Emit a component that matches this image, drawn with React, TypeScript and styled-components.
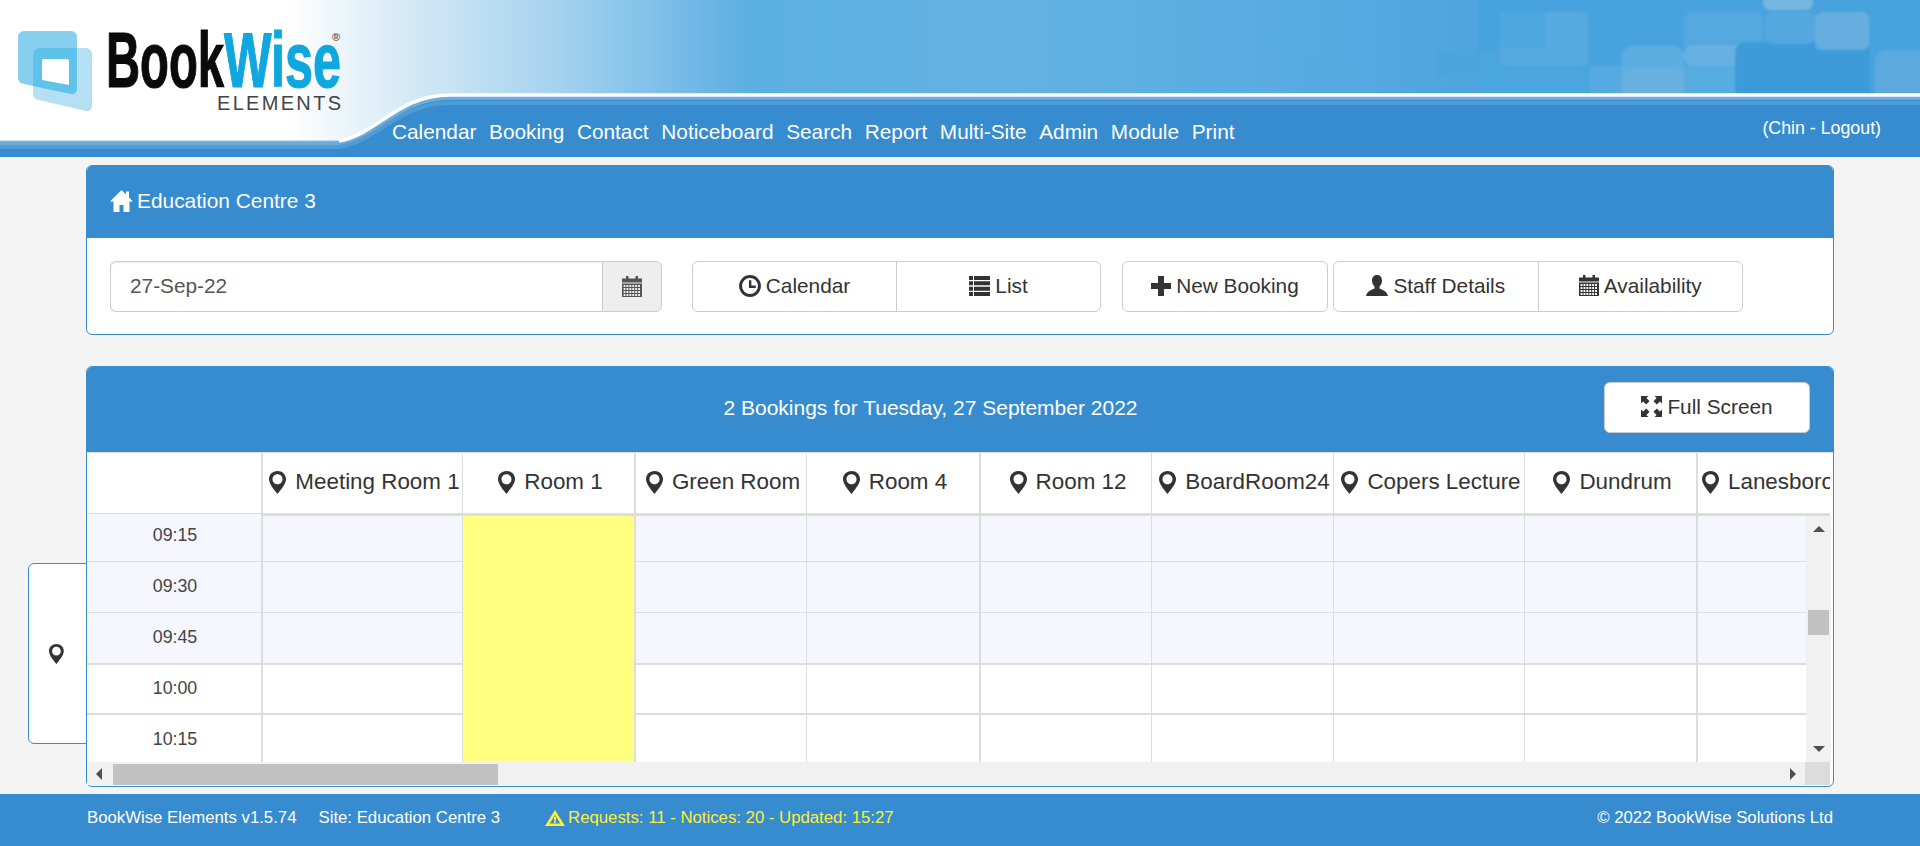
import React from "react";
import styled, { createGlobalStyle } from "styled-components";

const BLUE = "#378cd0";

const Global = createGlobalStyle`
  html, body { margin: 0; padding: 0; background: #f4f4f4; overflow: hidden; }
  body { font-family: "Liberation Sans", Arial, sans-serif; color: #333; }
  * { box-sizing: border-box; }
`;

const Page = styled.div`
  display: flex;
  flex-direction: column;
  height: 846px;
`;

/* ---------- top banner ---------- */
const Banner = styled.header`
  position: relative;
  height: 157px;
  flex: none;
  display: flex;
  align-items: flex-start;
  overflow: hidden;
  background: #fff;
`;
const BannerArt = styled.svg`
  position: absolute;
  inset: 0;
  width: 1920px;
  height: 157px;
`;
const Logo = styled.svg`
  position: relative;
  flex: none;
  width: 392px;
  height: 130px;
`;
const Nav = styled.nav`
  position: relative;
  display: flex;
  gap: 12.7px;
  margin-top: 120px;
  font-size: 20.8px;
  line-height: 24px;
  color: #fff;
  flex: 1;
`;
const UserLink = styled.div`
  position: relative;
  margin: 117px 39px 0 0;
  font-size: 17.8px;
  line-height: 22px;
  color: #fff;
`;

/* ---------- panels ---------- */
const Main = styled.main`
  flex: 1;
  padding: 8px 86px 0 86px;
  display: flex;
  flex-direction: column;
  gap: 31px;
`;
const Panel = styled.section<{ $h: number }>`
  position: relative;
  height: ${(p) => p.$h}px;
  flex: none;
  border: 1px solid ${BLUE};
  border-radius: 6px;
  background: #fff;
`;
const PlaceHead = styled.div`
  height: 72px;
  background: ${BLUE};
  border-radius: 5px 5px 0 0;
  display: flex;
  align-items: center;
  gap: 4px;
  padding: 0 0 3px 23px;
  font-size: 20.9px;
  color: #fff;
`;
const Toolbar = styled.div`
  display: flex;
  padding: 23px 0 0 23px;
`;
const DateGroup = styled.div`
  display: flex;
  width: 552px;
  height: 51px;
  margin-right: 30px;
`;
const DateInput = styled.input`
  flex: 1;
  min-width: 0;
  border: 1px solid #ccc;
  border-right: 0;
  border-radius: 6px 0 0 6px;
  padding: 0 19px 2px;
  font: 20.8px "Liberation Sans", Arial, sans-serif;
  color: #555;
  box-shadow: inset 0 1px 1px rgba(0, 0, 0, 0.075);
  outline: none;
`;
const DateAddon = styled.div`
  width: 60px;
  display: flex;
  align-items: center;
  justify-content: center;
  background: #eee;
  border: 1px solid #ccc;
  border-radius: 0 6px 6px 0;
  color: #555;
`;
const BtnGroup = styled.div<{ $w: number; $mr: number }>`
  display: flex;
  width: ${(p) => p.$w}px;
  height: 51px;
  margin-right: ${(p) => p.$mr}px;
  border: 1px solid #ccc;
  border-radius: 6px;
  background: #fff;
`;
const Btn = styled.button`
  flex: 1;
  display: flex;
  align-items: center;
  justify-content: center;
  gap: 5px;
  padding: 0 0 2px;
  border: 0;
  background: none;
  font: 20.8px "Liberation Sans", Arial, sans-serif;
  color: #333;
  & + & { border-left: 1px solid #ccc; }
`;
const BoardHead = styled.div`
  height: 85px;
  background: ${BLUE};
  border-radius: 5px 5px 0 0;
  display: flex;
  align-items: flex-start;
  padding: 15px 23px 0 170px;
`;
const BoardTitle = styled.h2`
  flex: 1;
  margin: 0;
  font-weight: 400;
  font-size: 21px;
  line-height: 52px;
  text-align: center;
  color: #fff;
`;
const FullBtn = styled.button`
  width: 206px;
  height: 51px;
  display: flex;
  align-items: center;
  justify-content: center;
  gap: 5px;
  padding: 0 0 2px;
  background: #fff;
  border: 1px solid #ccc;
  border-radius: 6px;
  font: 20.8px "Liberation Sans", Arial, sans-serif;
  color: #333;
`;
const SideTab = styled.div`
  position: absolute;
  left: -59px;
  top: 196px;
  width: 59px;
  height: 181px;
  background: #fff;
  border: 1px solid ${BLUE};
  border-radius: 6px 0 0 6px;
  display: flex;
  align-items: center;
  justify-content: center;
  padding-right: 2px;
`;

/* ---------- schedule ---------- */
const HeadRow = styled.div`
  display: flex;
  height: 64px;
  border-top: 1px solid #ddd;
  background: #fff;
`;
const TimeHead = styled.div`
  width: 174px;
  flex: none;
  border-bottom: 2px solid #f6f7fe;
  box-shadow: inset 0 -1px 0 #ddd;
`;
const RoomHead = styled.div<{ $w: number; $b: number }>`
  width: ${(p) => p.$w}px;
  flex: none;
  border-left: ${(p) => p.$b}px solid #ddd;
  border-bottom: 3px solid #ddd;
  display: flex;
  align-items: center;
  justify-content: safe center;
  gap: 9px;
  padding: 0 0 2px 4px;
  font-size: 22.4px;
  color: #333;
  white-space: nowrap;
  overflow: hidden;
`;
const BodyArea = styled.div`
  display: flex;
  height: 246px;
`;
const Clip = styled.div`
  flex: none;
  width: 1719px;
  height: 246px;
  overflow: hidden;
  display: flex;
`;
const Column = styled.div<{ $w: number; $b: number }>`
  width: ${(p) => p.$w}px;
  flex: none;
  border-left: ${(p) => p.$b}px solid #ddd;
  margin-top: -5px;
`;
const Slot = styled.div<{ $h: number; $line: number; $tint: boolean }>`
  height: ${(p) => p.$h}px;
  background: ${(p) => (p.$tint ? "#f6f7fe" : "#fff")};
  border-bottom: ${(p) => p.$line}px solid #ddd;
`;
const TimeSlot = styled(Slot)`
  display: flex;
  align-items: center;
  justify-content: center;
  padding: 0 0 2px 2px;
  font-size: 17.8px;
  color: #444;
`;
const TimeColumn = styled.div`
  width: 174px;
  flex: none;
  margin-top: -5px;
`;
const BookingBlock = styled.div`
  height: 270px;
  background: #ffff80;
`;
const VBar = styled.div`
  width: 25px;
  flex: none;
  height: 246px;
  background: #f1f1f1;
  display: flex;
  flex-direction: column;
  align-items: center;
  padding-top: 94px;
  position: relative;
`;
const Thumb = styled.div`
  width: 21px;
  height: 25px;
  background: #c1c1c1;
`;
const ArrowBtn = styled.svg<{ $pos: string }>`
  position: absolute;
  ${(p) => p.$pos}
  fill: #505050;
`;
const HBar = styled.div`
  position: relative;
  display: flex;
  width: 1743px;
  height: 23px;
  background: #f1f1f1;
`;
const HThumb = styled.div`
  margin: 2px 0 0 26px;
  width: 385px;
  height: 21px;
  background: #c1c1c1;
`;
const Corner = styled.div`
  margin-left: auto;
  width: 25px;
  background: #dcdcdc;
`;

/* ---------- footer ---------- */
const Footer = styled.footer`
  height: 52px;
  flex: none;
  background: ${BLUE};
  color: #fff;
  display: flex;
  align-items: center;
  padding: 0 87px 5px;
  font-size: 16.75px;
`;
const FootItem = styled.span<{ $mr: number }>`
  margin-right: ${(p) => p.$mr}px;
`;
const FootAlert = styled.span`
  display: flex;
  align-items: center;
  gap: 3px;
  color: #ffee33;
`;
const FootRight = styled.span`
  margin-left: auto;
`;

/* ---------- icons ---------- */
const IconSvg = styled.svg`
  flex: none;
  fill: currentColor;
`;
const MarkerSvg = styled(IconSvg)`
  color: #333;
`;
const Marker = ({ s = 23 }: { s?: number }) => (
  <MarkerSvg width={s * 0.74} height={s} viewBox="0 0 17 23">
    <path
      fillRule="evenodd"
      d="M8.5 0C3.6 0 0 3.6 0 8.2 0 13 5.5 19 8.5 23c3-4 8.5-10 8.5-14.800C17 3.600 13.400 0 8.500 0zm0 3.300c3 0 5 2.200 5 5s-2 5-5 5-5-2.200-5-5 2-5 5-5z"
    />
  </MarkerSvg>
);
const HomeIcon = () => (
  <IconSvg width="23" height="22" viewBox="0 0 23 22">
    <path d="M11.500 0 0 11.500h3.500V22h6v-7h4v7h6V11.500H23l-4-4V1.500h-3v3z" />
  </IconSvg>
);
const calendarDots = (() => {
  let d = "M0 7.500h20V21H0z";
  for (let r = 0; r < 4; r++) {
    for (let c = 0; c < 6; c++) {
      d += `M${1.6 + c * 2.9} ${9 + r * 3}h1.900v1.900h-1.900z`;
    }
  }
  return d;
})();
const CalIcon = () => (
  <IconSvg width="20" height="21" viewBox="0 0 20 21">
    <path d="M4 0h2.500v2.500h7V0H16v2.500h4v4H0v-4h4z" />
    <path fillRule="evenodd" d={calendarDots} />
  </IconSvg>
);
const ClockIcon = () => (
  <IconSvg width="22" height="22" viewBox="0 0 21 21">
    <circle cx="10.500" cy="10.500" r="9" fill="none" stroke="currentColor" strokeWidth="2.800" />
    <path d="M9.500 5h2.300v5h4.200v2.300H9.500z" />
  </IconSvg>
);
const ListIcon = () => (
  <IconSvg width="21" height="20" viewBox="0 0 21 20">
    <path d="M0 0h4v4H0zM5 0h16v4H5zM0 5.300h4v4H0zM5 5.300h16v4H5zM0 10.700h4v4H0zM5 10.700h16v4H5zM0 16h4v4H0zM5 16h16v4H5z" />
  </IconSvg>
);
const PlusIcon = () => (
  <IconSvg width="20" height="20" viewBox="0 0 20 20">
    <path d="M7 0h6v7h7v6h-7v7H7v-7H0V7h7z" />
  </IconSvg>
);
const UserIcon = () => (
  <IconSvg width="22" height="21" viewBox="0 0 22 21">
    <path d="M11 0C7.500 0 6 2.500 6 5.500c0 2.500 1 4.500 2.500 6v2C5.500 15 1 16 0 21h22c-1-5-5.500-6-8.500-7.500v-2c1.500-1.500 2.500-3.500 2.500-6C16 2.500 14.500 0 11 0z" />
  </IconSvg>
);
const FullIcon = () => (
  <IconSvg width="21" height="21" viewBox="0 0 21 21">
    <path d="M0 0h7.500L5.400 2.100 8.500 5.200 5.200 8.500 2.100 5.400 0 7.500zM21 0v7.500l-2.100-2.100-3.100 3.100-3.300-3.300 3.100-3.100L13.500 0zM0 21v-7.500l2.100 2.100 3.100-3.100 3.300 3.300-3.100 3.100L7.500 21zM21 21h-7.500l2.100-2.100-3.100-3.100 3.300-3.300 3.100 3.100 2.100-2.100z" />
  </IconSvg>
);
const WarnIcon = () => (
  <IconSvg width="20" height="16" viewBox="0 0 20 16">
    <path
      fillRule="evenodd"
      d="M10 0 20 16H0zM10 5 4.800 13.500h10.400zM9 6.800h2v3.700H9zM9 11h2v1.800H9z"
    />
  </IconSvg>
);

/* ---------- data ---------- */
const rooms: { name: string; w: number; b: number }[] = [
  { name: "Meeting Room 1", w: 201, b: 2 },
  { name: "Room 1", w: 172, b: 1 },
  { name: "Green Room", w: 172, b: 2 },
  { name: "Room 4", w: 173, b: 1 },
  { name: "Room 12", w: 172, b: 2 },
  { name: "BoardRoom24", w: 182, b: 1 },
  { name: "Copers Lecture", w: 191, b: 1 },
  { name: "Dundrum", w: 172, b: 1 },
  { name: "Lanesborough", w: 134, b: 2 },
];
const slots = [
  { time: "09:15", h: 51, line: 1, tint: true },
  { time: "09:30", h: 51, line: 1, tint: true },
  { time: "09:45", h: 52, line: 2, tint: true },
  { time: "10:00", h: 50, line: 2, tint: false },
  { time: "10:15", h: 51, line: 0, tint: false },
];
const navItems = ["Calendar", "Booking", "Contact", "Noticeboard", "Search", "Report", "Multi-Site", "Admin", "Module", "Print"];

const curve = "M0 141H339C378 134 398 95 450 95H1920";

const blocks: { x: number; y: number; w: number; h: number; r: number; c: string }[] = [
  { x: 1261, y: 27, w: 44, h: 30, r: 5, c: "#58abe1" },
  { x: 1305, y: 57, w: 65, h: 40, r: 4, c: "#56a9e0" },
  { x: 1434, y: 50, w: 44, h: 28, r: 5, c: "#4ca4de" },
  { x: 1478, y: -10, w: 460, h: 112, r: 0, c: "#46a2de" },
  { x: 1478, y: 50, w: 112, h: 50, r: 8, c: "#4ca6df" },
  { x: 1500, y: 12, w: 88, h: 54, r: 8, c: "#57aae0" },
  { x: 1500, y: 12, w: 46, h: 36, r: 3, c: "#4fa7df" },
  { x: 1590, y: 66, w: 32, h: 34, r: 0, c: "#55aae1" },
  { x: 1622, y: 46, w: 62, h: 50, r: 10, c: "#5cade1" },
  { x: 1622, y: 68, w: 62, h: 30, r: 8, c: "#67b0e0" },
  { x: 1684, y: 66, w: 55, h: 34, r: 0, c: "#57abe1" },
  { x: 1684, y: 12, w: 79, h: 54, r: 8, c: "#54a8e0" },
  { x: 1684, y: 45, w: 79, h: 21, r: 8, c: "#66b0e2" },
  { x: 1735, y: 42, w: 135, h: 58, r: 10, c: "#3e9bda" },
  { x: 1765, y: 12, w: 50, h: 32, r: 8, c: "#55a7df" },
  { x: 1815, y: 12, w: 54, h: 38, r: 7, c: "#66ade0" },
  { x: 1763, y: -20, w: 50, h: 30, r: 7, c: "#76b6e1" },
  { x: 1875, y: 50, w: 60, h: 50, r: 10, c: "#5ca9df" },
];

const BannerDrawing = () => (
  <BannerArt viewBox="0 0 1920 157">
    <defs>
      <linearGradient id="sky" x1="0" x2="1" y1="0" y2="0">
        <stop offset="0" stopColor="#fff" />
        <stop offset="0.15" stopColor="#fff" />
        <stop offset="0.22" stopColor="#d0e7f5" />
        <stop offset="0.29" stopColor="#a5d2ee" />
        <stop offset="0.36" stopColor="#72b9e6" />
        <stop offset="0.39" stopColor="#5cafe2" />
        <stop offset="0.52" stopColor="#62b2e2" />
        <stop offset="0.68" stopColor="#58aae2" />
        <stop offset="1" stopColor="#3a96d6" />
      </linearGradient>
      <filter id="soft" x="-5%" y="-5%" width="110%" height="110%">
        <feGaussianBlur stdDeviation="1.200" />
      </filter>
    </defs>
    <rect width="1920" height="157" fill="url(#sky)" />
    <g filter="url(#soft)">
      {blocks.map((b) => (
        <rect key={`${b.x}-${b.y}`} x={b.x} y={b.y} width={b.w} height={b.h} rx={b.r} fill={b.c} />
      ))}
    </g>
    <path d={curve + "V157H0Z"} fill={BLUE} />
    <path d="M0 143.500H339C378 136.500 398 97.500 450 97.500H1920" fill="none" stroke="#6eabd8" strokeWidth="5" />
    <path d="M0 147H339C378 141 398 103 450 103H1920" fill="none" stroke="#4f9bd6" strokeWidth="4" />
    <path d="M339 141C378 134 398 95 450 95H1920" fill="none" stroke="#fff" strokeWidth="3.500" />
    <path d="M0 141H339" fill="none" stroke="#8ec0de" strokeWidth="1" />
  </BannerArt>
);

const logoFont = "'Liberation Sans', Arial, sans-serif";

const LogoDrawing = () => (
  <Logo viewBox="0 0 392 130">
    <path d="M24 31h47a6 6 0 0 1 6 6v52a5 5 0 0 1-6 5L24 84a6 6 0 0 1-6-6V37a6 6 0 0 1 6-6z" fill="#87cfec" />
    <path d="M39 48h47a6 6 0 0 1 6 6v52a5 5 0 0 1-6 5l-47-11a6 6 0 0 1-6-6V54a6 6 0 0 1 6-6z" fill="#b5dff3" />
    <path d="M39 48h38v41a5 5 0 0 1-6 5l-38-8V54a6 6 0 0 1 6-6z" fill="#5fc2ea" />
    <path d="M44 59h23a2 2 0 0 1 2 2v24l-27-5V61a2 2 0 0 1 2-2z" fill="#fff" />
    <text x="106" y="87" fontFamily={logoFont} fontWeight="700" fontSize="78" fill="#0a0a0a" stroke="#0a0a0a" strokeWidth="1.200" textLength="118" lengthAdjust="spacingAndGlyphs">
      Book
    </text>
    <text x="224" y="87" fontFamily={logoFont} fontWeight="700" fontSize="78" fill="#0fa7de" stroke="#0fa7de" strokeWidth="1.200" textLength="117" lengthAdjust="spacingAndGlyphs">
      Wise
    </text>
    <text x="332" y="41" fontFamily={logoFont} fontSize="11" fontWeight="700" fill="#555">
      ®
    </text>
    <text x="217" y="110" fontFamily={logoFont} fontSize="20" fill="#444" textLength="124" lengthAdjust="spacing">
      ELEMENTS
    </text>
  </Logo>
);

export default function App() {
  return (
    <Page>
      <Global />
      <Banner>
        <BannerDrawing />
        <LogoDrawing />
        <Nav>
          {navItems.map((n) => (
            <span key={n}>{n}</span>
          ))}
        </Nav>
        <UserLink>(Chin - Logout)</UserLink>
      </Banner>
      <Main>
        <Panel $h={170}>
          <PlaceHead>
            <HomeIcon />
            Education Centre 3
          </PlaceHead>
          <Toolbar>
            <DateGroup>
              <DateInput readOnly value="27-Sep-22" />
              <DateAddon>
                <CalIcon />
              </DateAddon>
            </DateGroup>
            <BtnGroup $w={409} $mr={21}>
              <Btn>
                <ClockIcon />
                Calendar
              </Btn>
              <Btn>
                <ListIcon />
                List
              </Btn>
            </BtnGroup>
            <BtnGroup $w={206} $mr={5}>
              <Btn>
                <PlusIcon />
                New Booking
              </Btn>
            </BtnGroup>
            <BtnGroup $w={410} $mr={0}>
              <Btn>
                <UserIcon />
                Staff Details
              </Btn>
              <Btn>
                <CalIcon />
                Availability
              </Btn>
            </BtnGroup>
          </Toolbar>
        </Panel>
        <Panel $h={421}>
          <BoardHead>
            <BoardTitle>2 Bookings for Tuesday, 27 September 2022</BoardTitle>
            <FullBtn>
              <FullIcon />
              Full Screen
            </FullBtn>
          </BoardHead>
          <SideTab>
            <Marker s={20} />
          </SideTab>
          <HeadRow>
            <TimeHead />
            {rooms.map((r) => (
              <RoomHead key={r.name} $w={r.w} $b={r.b}>
                <Marker />
                <span>{r.name}</span>
              </RoomHead>
            ))}
          </HeadRow>
          <BodyArea>
            <Clip>
              <TimeColumn>
                {slots.map((s) => (
                  <TimeSlot key={s.time} $h={s.h} $line={s.line} $tint={s.tint}>
                    {s.time}
                  </TimeSlot>
                ))}
              </TimeColumn>
              {rooms.map((r, i) => (
                <Column key={r.name} $w={r.w} $b={r.b}>
                  {i === 1 ? (
                    <BookingBlock />
                  ) : (
                    slots.map((s) => <Slot key={s.time} $h={s.h} $line={s.line} $tint={s.tint} />)
                  )}
                </Column>
              ))}
            </Clip>
            <VBar>
              <ArrowBtn $pos="top:10px;left:6.5px;" width="12" height="6" viewBox="0 0 12 6">
                <path d="M6 0l6 6H0z" />
              </ArrowBtn>
              <Thumb />
              <ArrowBtn $pos="bottom:10px;left:6.5px;" width="12" height="6" viewBox="0 0 12 6">
                <path d="M0 0h12L6 6z" />
              </ArrowBtn>
            </VBar>
          </BodyArea>
          <HBar>
            <ArrowBtn $pos="left:9px;top:6px;" width="6" height="12" viewBox="0 0 6 12">
              <path d="M6 0v12L0 6z" />
            </ArrowBtn>
            <HThumb />
            <ArrowBtn $pos="right:34px;top:6px;" width="6" height="12" viewBox="0 0 6 12">
              <path d="M0 0l6 6-6 6z" />
            </ArrowBtn>
            <Corner />
          </HBar>
        </Panel>
      </Main>
      <Footer>
        <FootItem $mr={22}>BookWise Elements v1.5.74</FootItem>
        <FootItem $mr={45}>Site: Education Centre 3</FootItem>
        <FootAlert>
          <WarnIcon />
          Requests: 11 - Notices: 20 - Updated: 15:27
        </FootAlert>
        <FootRight>© 2022 BookWise Solutions Ltd</FootRight>
      </Footer>
    </Page>
  );
}
